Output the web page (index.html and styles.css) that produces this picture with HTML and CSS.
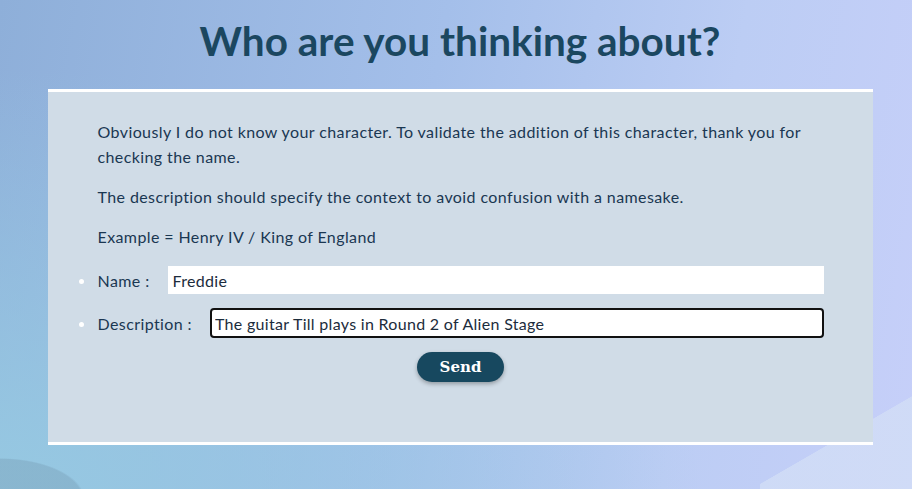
FILE: index.html
```html
<!DOCTYPE html>
<html lang="en">
<head>
<meta charset="utf-8">
<title>Who are you thinking about?</title>
<link rel="stylesheet" href="styles.css">
</head>
<body>
<main class="page">
  <h1 class="title">Who are you thinking about?</h1>
  <section class="panel">
    <p class="text">Obviously I do not know your character. To validate the addition of this character, thank you for checking the name.</p>
    <p class="text">The description should specify the context to avoid confusion with a namesake.</p>
    <p class="text">Example = Henry IV / King of England</p>
    <form class="form">
      <ul class="fields">
        <li class="field">
          <label class="label" for="name">Name :</label>
          <input class="input" id="name" type="text" value="Freddie">
        </li>
        <li class="field">
          <label class="label" for="desc">Description :</label>
          <input class="input input-active" id="desc" type="text" value="The guitar Till plays in Round 2 of Alien Stage">
        </li>
      </ul>
      <div class="actions">
        <button class="btn" type="button">Send</button>
      </div>
    </form>
  </section>
</main>
</body>
</html>
```

FILE: styles.css
```css
* { box-sizing: border-box; }
html, body { height: 100%; margin: 0; }
body {
  overflow: hidden;
  font-family: "Lato", "Open Sans", sans-serif;
  background:
    radial-gradient(ellipse 85px 42px at 0px 500px, rgba(125, 165, 190, 0.5) 0 97%, transparent 100%),
    linear-gradient(150deg, transparent 0 55%, rgba(212, 224, 246, 0.7) 55.3% 100%) 760px 370px / 152px 119px no-repeat,
    radial-gradient(ellipse 700px 420px at 0% 100%, rgba(150, 202, 226, 0.95) 0%, rgba(150, 202, 226, 0) 100%),
    linear-gradient(100deg, #8eafd9 0%, #a4bfea 45%, #bccdf4 75%, #c6cff9 100%);
}
.page {
  display: flex;
  flex-direction: column;
  align-items: center;
  padding: 16px 0 0 8px;
}
.title {
  margin: 0 0 23px;
  font-size: 40.5px;
  line-height: 50px;
  font-weight: 700;
  color: #1b4760;
}
.panel {
  width: 825px;
  background: #d0dce7;
  border-top: 3px solid #ffffff;
  border-bottom: 3px solid #ffffff;
  padding: 27px 49px 60px 50px;
}
.text {
  margin: 0 0 15px;
  font-size: 16px;
  line-height: 25px;
  letter-spacing: 0.4px;
  color: #1a3752;
}
.form { margin: 0; padding-top: 2px; }
.fields {
  margin: 0;
  padding: 0;
  list-style: none;
}
.field {
  position: relative;
  display: flex;
  align-items: center;
  margin-bottom: 14px;
}
.field::before {
  content: "";
  position: absolute;
  left: -19px;
  top: 50%;
  width: 5px;
  height: 5px;
  margin-top: -1px;
  border-radius: 50%;
  background: #ffffff;
}
.label {
  font-size: 16px;
  letter-spacing: 0.4px;
  color: #1a3752;
  margin-right: 18px;
  white-space: nowrap;
}
.input {
  flex: 1;
  height: 28px;
  border: none;
  background: #ffffff;
  padding: 0 5px;
  font-family: "Lato", "Open Sans", sans-serif;
  font-size: 16px;
  letter-spacing: 0.3px;
  color: #1c2c3c;
  outline: none;
}
.input-active {
  height: 30px;
  border: 2px solid #111111;
  border-radius: 4px;
  padding: 0 3px;
}
.actions {
  display: flex;
  justify-content: center;
}
.btn {
  width: 87px;
  height: 30px;
  border: none;
  border-radius: 15px;
  background: #17485f;
  color: #ffffff;
  font-family: "DejaVu Serif", "Liberation Serif", serif;
  font-weight: 700;
  font-size: 15px;
  box-shadow: 0 2px 4px rgba(0, 0, 0, 0.3);
  cursor: pointer;
}
```
